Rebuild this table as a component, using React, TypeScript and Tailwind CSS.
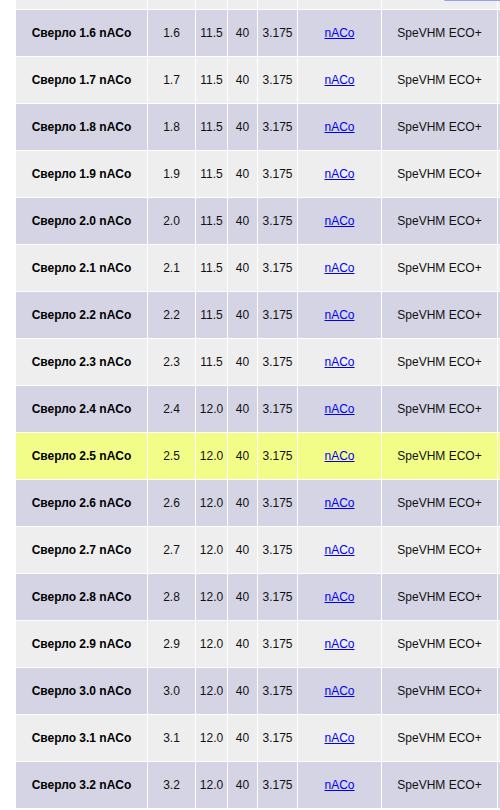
import React from "react";

const rows: { name: string; d: string; l: string; hi?: boolean }[] = [
  { name: "1.6", d: "1.6", l: "11.5" },
  { name: "1.7", d: "1.7", l: "11.5" },
  { name: "1.8", d: "1.8", l: "11.5" },
  { name: "1.9", d: "1.9", l: "11.5" },
  { name: "2.0", d: "2.0", l: "11.5" },
  { name: "2.1", d: "2.1", l: "11.5" },
  { name: "2.2", d: "2.2", l: "11.5" },
  { name: "2.3", d: "2.3", l: "11.5" },
  { name: "2.4", d: "2.4", l: "12.0" },
  { name: "2.5", d: "2.5", l: "12.0", hi: true },
  { name: "2.6", d: "2.6", l: "12.0" },
  { name: "2.7", d: "2.7", l: "12.0" },
  { name: "2.8", d: "2.8", l: "12.0" },
  { name: "2.9", d: "2.9", l: "12.0" },
  { name: "3.0", d: "3.0", l: "12.0" },
  { name: "3.1", d: "3.1", l: "12.0" },
  { name: "3.2", d: "3.2", l: "12.0" },
];

const grid =
  "grid grid-cols-[131px_47px_31px_29px_39px_83px_115px_10px] gap-x-px";

function Row({
  bg,
  h,
  children,
}: {
  bg: string;
  h: string;
  children?: React.ReactNode[];
}) {
  const cells = children ?? Array.from({ length: 8 }, () => null);
  return (
    <div className={`${grid} ${h}`}>
      {cells.map((c, i) => (
        <div key={i} className={`${bg} flex items-center justify-center overflow-hidden whitespace-nowrap`}>
          {c}
        </div>
      ))}
    </div>
  );
}

export default function App() {
  return (
    <div
      className="relative w-[500px] h-[810px] overflow-hidden bg-white pl-[16px]"
      style={{ fontFamily: '"Liberation Sans", Arial, sans-serif' }}
    >
      <div className="absolute top-[-5px] left-[443px] w-[70px] h-[6px] rounded-[3px] bg-[#4a66dd] border border-[#8fa3ee]" />
      <div className="flex flex-col gap-y-px text-[12px] text-[#111]">
        <Row bg="bg-[#eeeeee]" h="h-[9px]" />
        {rows.map((r, idx) => {
          const bg = r.hi
            ? "bg-[#f2fd88]"
            : idx % 2 === 0
            ? "bg-[#d4d4e4]"
            : "bg-[#eeeeee]";
          return (
            <Row key={r.name} bg={bg} h="h-[46px]">
              {[
                <span className="font-bold text-black">Сверло {r.name} nACo</span>,
                <span>{r.d}</span>,
                <span>{r.l}</span>,
                <span>40</span>,
                <span>3.175</span>,
                <a href="#" className="text-[#0000ee] underline">
                  nACo
                </a>,
                <span>SpeVHM ECO+</span>,
                null,
              ]}
            </Row>
          );
        })}
      </div>
    </div>
  );
}
